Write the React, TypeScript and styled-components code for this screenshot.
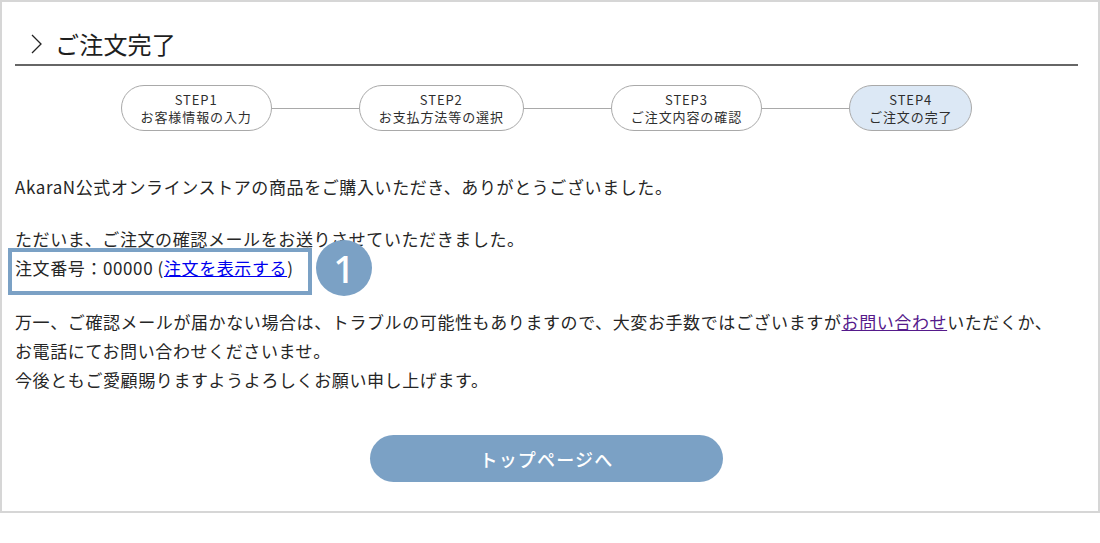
import React from 'react';
import styled, { createGlobalStyle } from 'styled-components';

const TEXT = '#262626';
const LINE_GRAY = '#a9a9a9';
const ACCENT = '#7ba1c5';
const FONT = `'Noto Sans CJK JP', 'Noto Sans', sans-serif`;

// =============================================================================
// Styled Components
// =============================================================================

const GlobalStyle = createGlobalStyle`
  html, body {
    margin: 0;
    padding: 0;
    background: #ffffff;
  }
  body {
    font-family: ${FONT};
    color: ${TEXT};
  }
`;

const Frame = styled.div`
  box-sizing: border-box;
  width: 1100px;
  height: 513px;
  border: 2px solid #d6d6d6;
  padding: 0 20px 0 13px;
`;

const Header = styled.header`
  display: flex;
  align-items: center;
  gap: 13px;
  padding: 24px 0 2px 16px;
  border-bottom: 2px solid #666666;
`;

const Chevron = styled.svg`
  width: 11px;
  height: 20px;
  flex: none;
`;

const Title = styled.h1`
  margin: 0;
  font-size: 24px;
  font-weight: 400;
  line-height: 36px;
  color: #1e1e1e;
  letter-spacing: 0.2px;
`;

const Steps = styled.ol`
  display: flex;
  align-items: center;
  justify-content: center;
  list-style: none;
  margin: 19px 0 0;
  padding: 0;
`;

const Step = styled.li<{ $current?: boolean }>`
  box-sizing: border-box;
  height: 46px;
  padding: 0 19px;
  display: flex;
  flex-direction: column;
  align-items: center;
  justify-content: center;
  border: 1px solid ${LINE_GRAY};
  border-radius: 23px;
  background: ${(p) => (p.$current ? '#dce8f5' : '#ffffff')};
  font-size: 13px;
  line-height: 17px;
  letter-spacing: 0.9px;
  color: #2e2e2e;
`;

const Connector = styled.li`
  width: 87px;
  height: 1px;
  background: ${LINE_GRAY};
`;

const Body = styled.section`
  padding-top: 41px;
  font-size: 17px;
  line-height: 29px;
  letter-spacing: 0.6px;
`;

const Para = styled.p<{ $gap?: number }>`
  margin: ${(p) => p.$gap ?? 0}px 0 0;
`;

const OrderLine = styled.span`
  position: relative;
  display: inline-block;
`;

const Highlight = styled.span`
  position: absolute;
  left: -7px;
  top: -5px;
  width: 304px;
  height: 47px;
  box-sizing: border-box;
  border: 4px solid ${ACCENT};
`;

const Marker = styled.span`
  position: absolute;
  left: 301px;
  top: -13px;
  width: 56px;
  height: 56px;
  border-radius: 50%;
  background: ${ACCENT};
  color: #ffffff;
  display: flex;
  align-items: center;
  justify-content: center;
  font-family: 'Noto Sans', sans-serif;
  font-size: 38px;
  font-weight: 500;
  letter-spacing: 0;
`;

const Link = styled.a<{ $visited?: boolean }>`
  color: ${(p) => (p.$visited ? '#551a8b' : '#0000ee')};
  text-decoration: underline;
`;

const Actions = styled.div`
  display: flex;
  justify-content: center;
  margin-top: 41px;
`;

const TopButton = styled.button`
  width: 353px;
  height: 47px;
  border: 0;
  border-radius: 24px;
  background: ${ACCENT};
  color: #ffffff;
  font-family: ${FONT};
  font-size: 18px;
  font-weight: 500;
  letter-spacing: 1.2px;
  cursor: pointer;
`;

// =============================================================================
// Main Component
// =============================================================================

const steps = [
  { label: 'STEP1', text: 'お客様情報の入力' },
  { label: 'STEP2', text: 'お支払方法等の選択' },
  { label: 'STEP3', text: 'ご注文内容の確認' },
  { label: 'STEP4', text: 'ご注文の完了' },
];

const App = () => {
  return (
    <>
      <GlobalStyle />
      <Frame>
        <Header>
          <Chevron viewBox="0 0 11 20">
            <path d="M1 1 L10 10 L1 19" fill="none" stroke="#222" strokeWidth="1.3" />
          </Chevron>
          <Title>ご注文完了</Title>
        </Header>

        <Steps>
          {steps.map((s, i) => (
            <React.Fragment key={s.label}>
              {i > 0 && <Connector />}
              <Step $current={i === steps.length - 1}>
                <span>{s.label}</span>
                <span>{s.text}</span>
              </Step>
            </React.Fragment>
          ))}
        </Steps>

        <Body>
          <Para>AkaraN公式オンラインストアの商品をご購入いただき、ありがとうございました。</Para>
          <Para $gap={23}>
            ただいま、ご注文の確認メールをお送りさせていただきました。
            <br />
            <OrderLine>
              注文番号：00000 (<Link href="#">注文を表示する</Link>)
              <Highlight />
              <Marker>1</Marker>
            </OrderLine>
          </Para>
          <Para $gap={25}>
            万一、ご確認メールが届かない場合は、トラブルの可能性もありますので、大変お手数ではございますが
            <Link href="#" $visited>
              お問い合わせ
            </Link>
            いただくか、
            <br />
            お電話にてお問い合わせくださいませ。
            <br />
            今後ともご愛顧賜りますようよろしくお願い申し上げます。
          </Para>
          <Actions>
            <TopButton>トップページへ</TopButton>
          </Actions>
        </Body>
      </Frame>
    </>
  );
};

export default App;
